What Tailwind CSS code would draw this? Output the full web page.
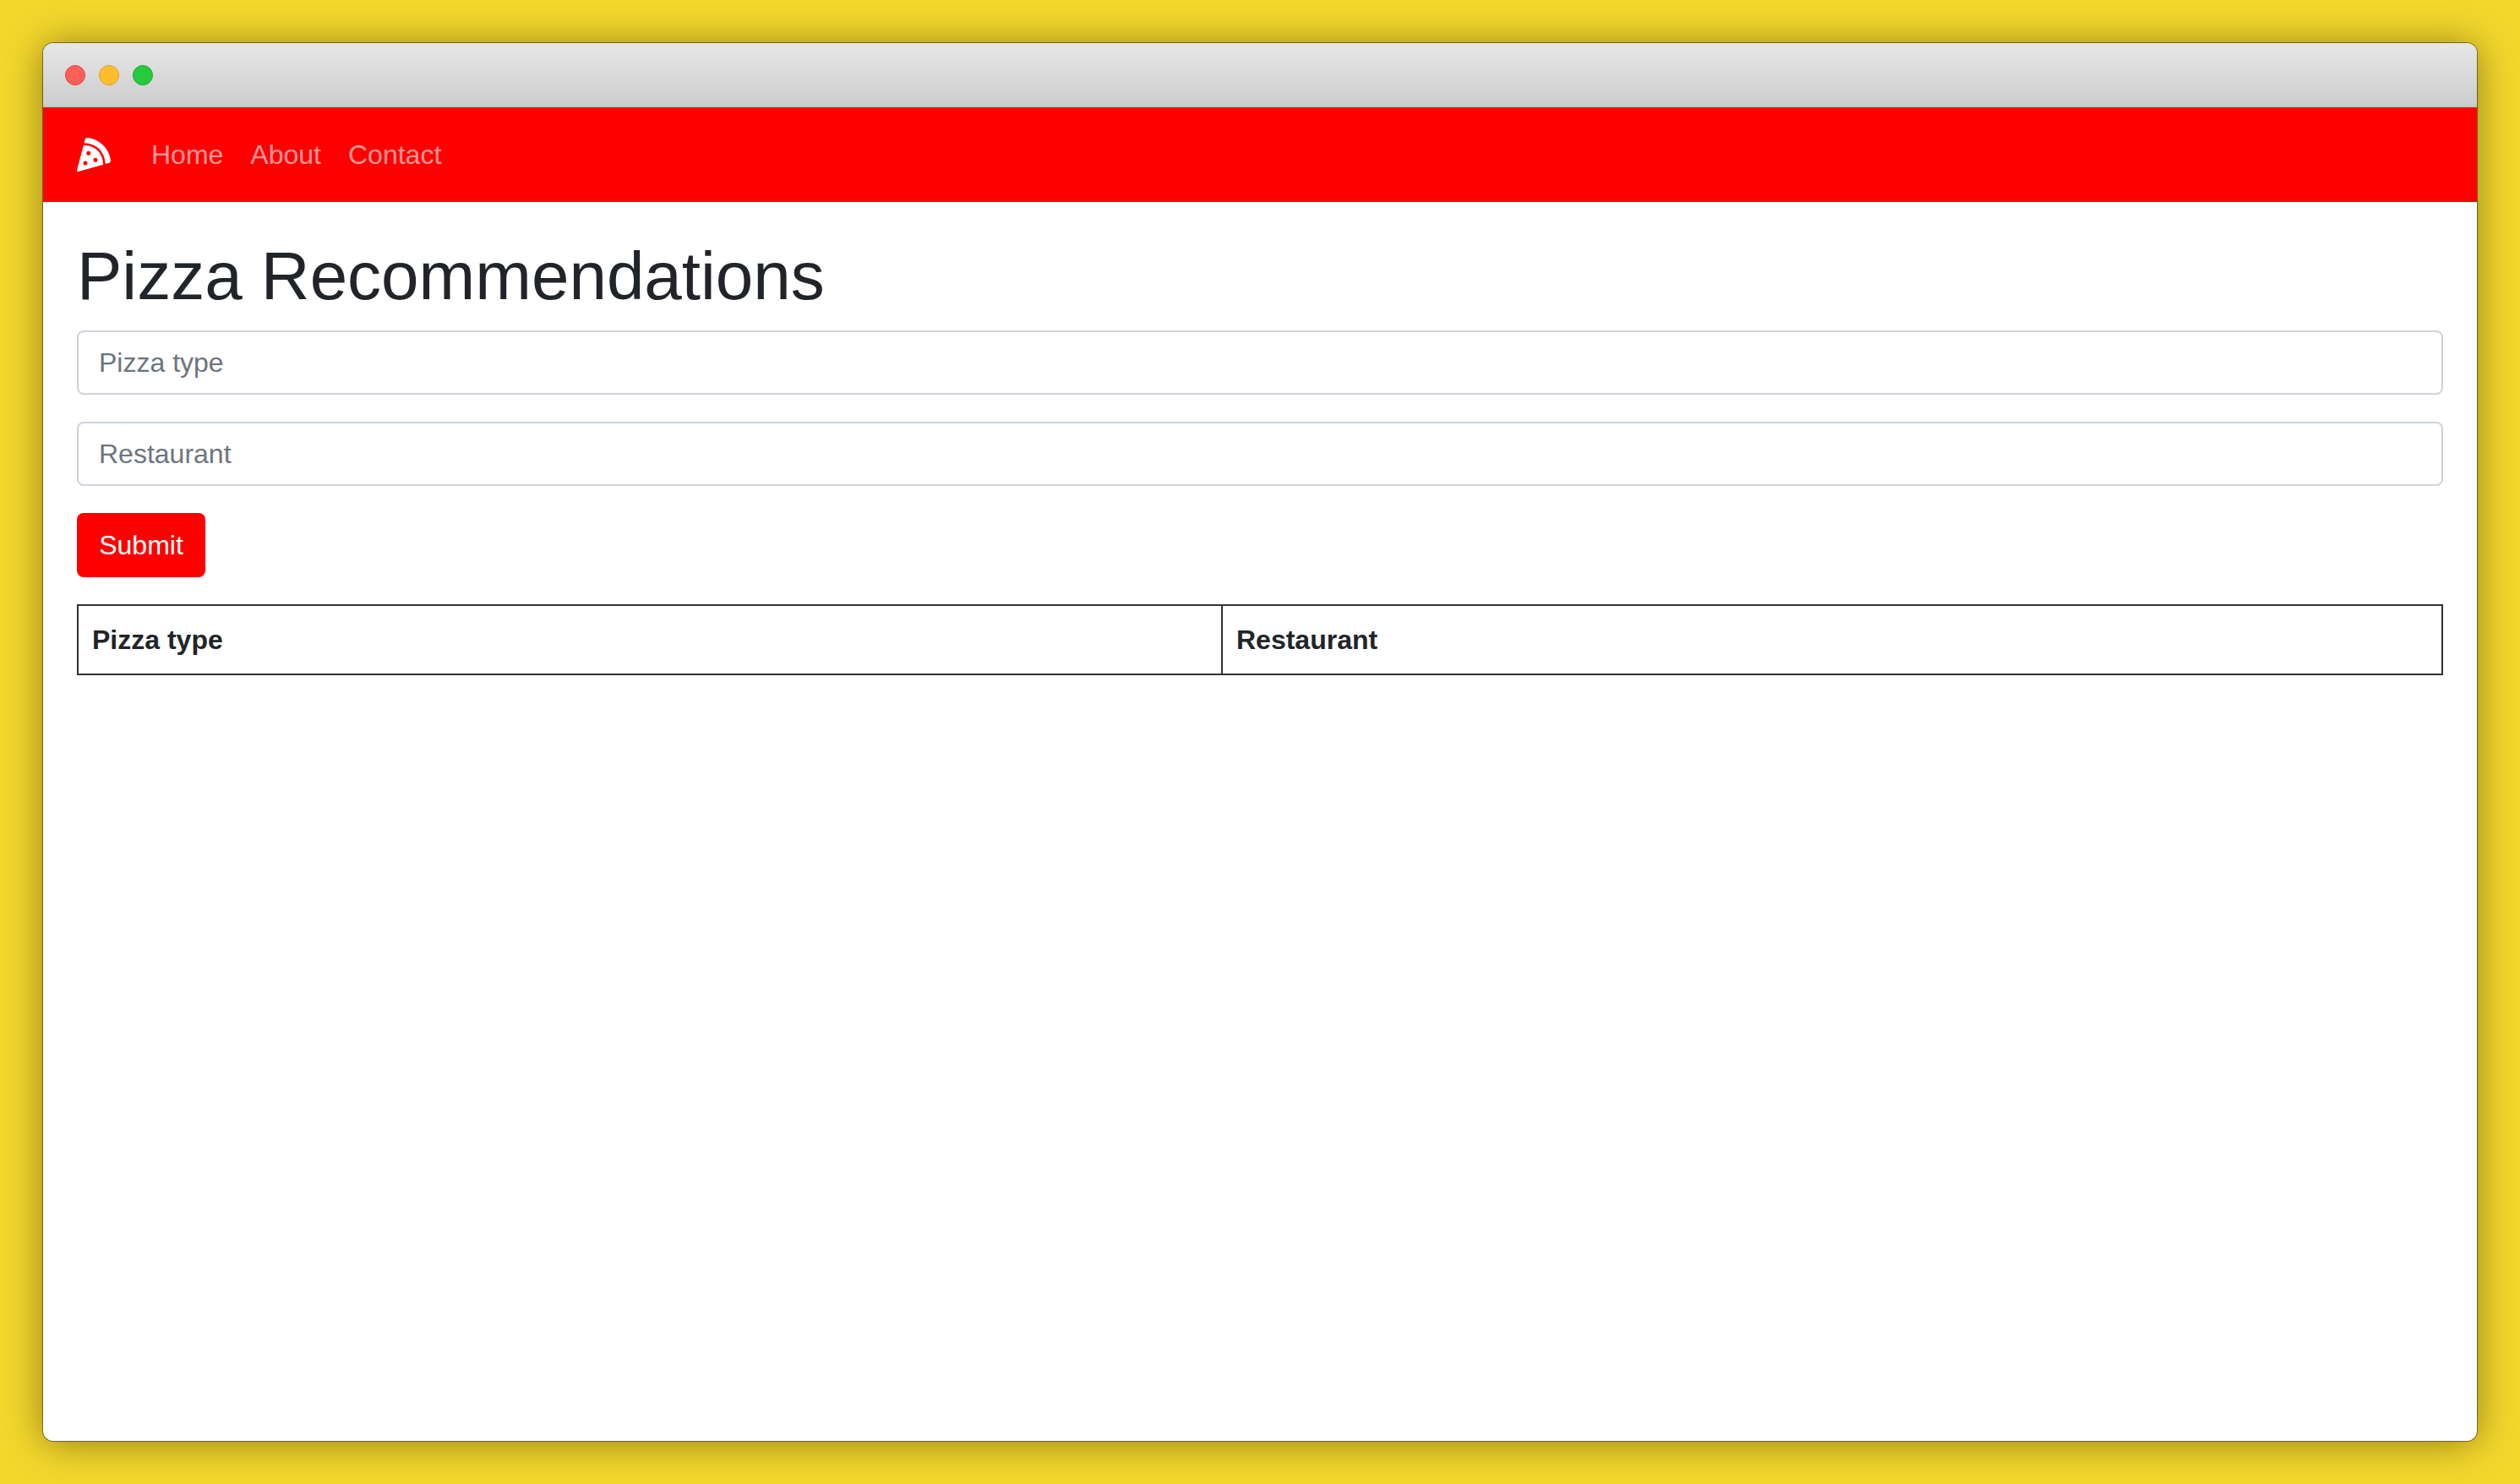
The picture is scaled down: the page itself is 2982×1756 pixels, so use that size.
<!DOCTYPE html>
<html lang="en">
<head>
<meta charset="utf-8">
<title>Pizza Recommendations</title>
<script src="https://cdn.jsdelivr.net/npm/@tailwindcss/browser@4"></script>
</head>
<body class="bg-[#f4d72c] font-['Liberation_Sans',Arial,sans-serif] text-[#212529]">
<div class="h-[1756px] pt-[51px] pl-[51px]">
  <div class="w-[2880px] h-[1654px] flex flex-col rounded-[12px] overflow-hidden bg-white shadow-[0_2px_46px_rgba(0,0,0,0.42),0_0_0_1px_rgba(0,0,0,0.42)]">
    <div class="h-[76px] shrink-0 flex items-center gap-4 pl-[26px] pt-[2px] bg-gradient-to-b from-[#e7e7e7] to-[#cdcdcd] border-b-2 border-[#c2c2c2]">
      <span class="w-6 h-6 rounded-full bg-[#ff5f56] border border-[#e0443e]"></span>
      <span class="w-6 h-6 rounded-full bg-[#ffbd2e] border border-[#dea123]"></span>
      <span class="w-6 h-6 rounded-full bg-[#27c93f] border border-[#1aab29]"></span>
    </div>
    <nav class="h-[112px] shrink-0 flex items-center bg-[#ff0000] pl-10">
      <svg class="w-10 h-10 mr-8 fill-white" viewBox="0 0 512 512" aria-hidden="true"><path d="M158.87.15c-16.16-1.52-31.2 8.42-35.33 24.12l-14.81 56.27c187.62 5.49 314.54 130.61 322.48 317l56.94-15.78c15.72-4.36 25.49-19.68 23.62-35.9C490.89 165.08 340.78 17.32 158.87.15zm-58.47 112L.55 491.64a16.21 16.21 0 0 0 20 19.75l379-105.1c-4.27-174.89-123.08-292.14-299.15-294.1zM128 416a32 32 0 1 1 32-32 32 32 0 0 1-32 32zm48-152a32 32 0 1 1 32-32 32 32 0 0 1-32 32zm104 104a32 32 0 1 1 32-32 32 32 0 0 1-32 32z"/></svg>
      <a href="#" class="px-4 text-[32px] leading-[48px] text-white/60">Home</a>
      <a href="#" class="px-4 text-[32px] leading-[48px] text-white/60">About</a>
      <a href="#" class="px-4 text-[32px] leading-[48px] text-white/60">Contact</a>
    </nav>
    <main class="flex-1 px-10 pt-10">
      <h1 class="text-[80px] leading-[96px] font-normal mb-4">Pizza Recommendations</h1>
      <form>
        <input type="text" placeholder="Pizza type" class="block w-full h-[76px] mb-8 px-6 text-[32px] border-2 border-[#ced4da] rounded-lg placeholder:text-[#6c757d]">
        <input type="text" placeholder="Restaurant" class="block w-full h-[76px] mb-8 px-6 text-[32px] border-2 border-[#ced4da] rounded-lg placeholder:text-[#6c757d]">
        <button type="button" class="block w-[152px] h-[76px] mb-8 text-[32px] text-white bg-[#ff0000] rounded-lg">Submit</button>
      </form>
      <table class="w-full table-fixed border-collapse">
        <thead>
          <tr>
            <th class="w-[1354px] h-[82px] px-4 border-2 border-[#333333] text-left text-[32px] font-bold">Pizza type</th>
            <th class="h-[82px] px-4 border-2 border-[#333333] text-left text-[32px] font-bold">Restaurant</th>
          </tr>
        </thead>
      </table>
    </main>
  </div>
</div>
</body>
</html>
